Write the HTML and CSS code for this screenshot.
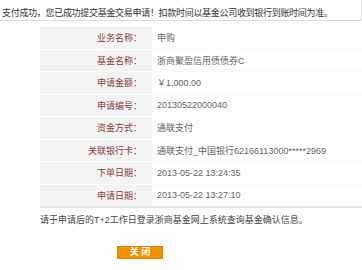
FILE: index.html
```html
<!DOCTYPE html>
<html lang="zh-CN">
<head>
<meta charset="UTF-8">
<title>基金交易申请</title>
<link rel="stylesheet" href="styles.css">
</head>
<body>
<div class="notice">支付成功，您已成功提交基金交易申请！扣款时间以基金公司收到银行到账时间为准。</div>
<table class="info">
    <tr><th>业务名称：</th><td>申购</td></tr>
    <tr><th>基金名称：</th><td>浙商聚盈信用债债券C</td></tr>
    <tr><th>申请金额：</th><td>￥1,000.00</td></tr>
    <tr><th>申请编号：</th><td>20130522000040</td></tr>
    <tr><th>资金方式：</th><td>通联支付</td></tr>
    <tr><th>关联银行卡：</th><td>通联支付_中国银行62166113000*****2969</td></tr>
    <tr><th>下单日期：</th><td>2013-05-22 13:24:35</td></tr>
    <tr><th>申请日期：</th><td>2013-05-22 13:27:10</td></tr>
</table>
<p class="tip">请于申请后的T+2工作日登录浙商基金网上系统查询基金确认信息。</p>
<div class="actions">
    <button class="close-btn">关 闭</button>
</div>
</body>
</html>
```

FILE: styles.css
```css
body {
    margin: 0;
    font-family: "Liberation Sans", "Noto Sans CJK SC", sans-serif;
    font-size: 9px;
    color: #444;
    background-color: #fff;
}
.notice {
    height: 17px;
    padding: 3px 0 0 2px;
    line-height: 20px;
    border-bottom: 1px solid #ddd;
    border-right: 1px solid #ddd;
    color: #333;
    letter-spacing: -0.3px;
    white-space: nowrap;
    overflow: hidden;
}
.info {
    margin: 6px 0 0 40px;
    width: 322px;
    border-collapse: collapse;
    border-bottom: 2px solid #e4e4e4;
}
.info th {
    width: 102px;
    height: 21.5px;
    padding: 0 10px 0 0;
    text-align: right;
    font-weight: normal;
    color: #8a3b3b;
    background-color: #f3f3f3;
    border-bottom: 1px solid #fff;
}
.info td {
    height: 21.5px;
    padding: 0 0 0 5px;
    color: #666;
    border-bottom: 1px solid #f9f9f9;
    white-space: nowrap;
}
.info tr:last-child th,
.info tr:last-child td {
    border-bottom: none;
}
.tip {
    margin: 5px 0 0 40px;
    color: #444;
    white-space: nowrap;
}
.actions {
    padding: 20px 0 0 117px;
}
.close-btn {
    width: 46px;
    height: 13px;
    padding: 0;
    font-family: inherit;
    font-size: 9px;
    font-weight: bold;
    line-height: 11px;
    color: #fff;
    background-color: #f39200;
    border: 1px solid #e08400;
    cursor: pointer;
}
```
